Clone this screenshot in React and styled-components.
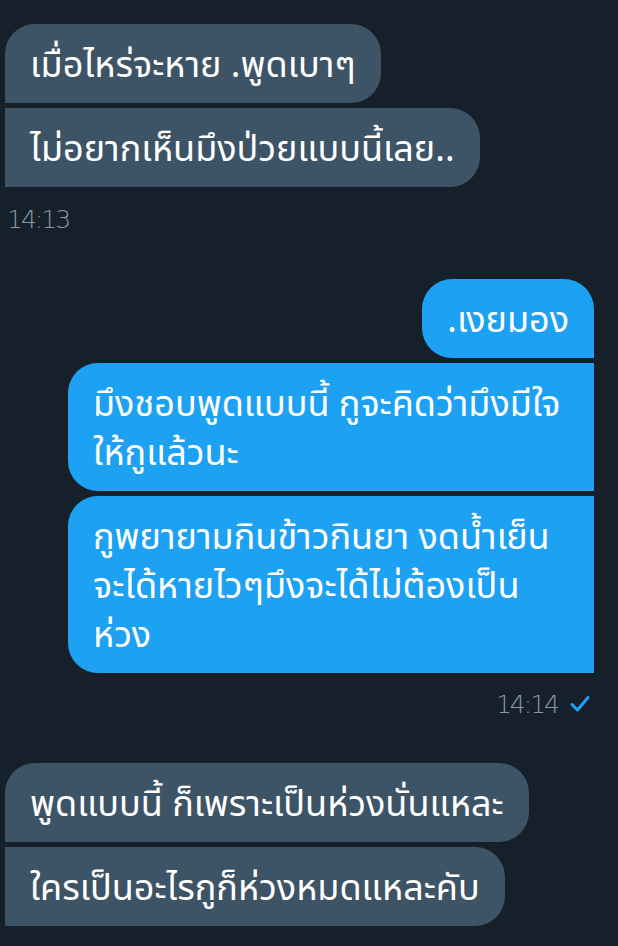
import React from 'react';
import styled, { createGlobalStyle } from 'styled-components';

const GlobalStyle = createGlobalStyle`
    html, body {
        margin: 0;
        padding: 0;
        background: #16202a;
    }
    body {
        font-family: "Noto Sans", "Noto Sans Thai", Roboto, sans-serif;
        -webkit-font-smoothing: antialiased;
    }
`

const Thread = styled.div`
    display: flex;
    flex-direction: column;
    width: 618px;
    height: 946px;
    overflow: hidden;
    padding-top: 24px;
    box-sizing: border-box;
`

const Group = styled.div`
    display: flex;
    flex-direction: column;
    gap: 5px;
    align-items: ${props => (props.mine ? 'flex-end' : 'flex-start')};
    padding: ${props => (props.mine ? '0 24px 0 0' : '0 0 0 5px')};
    margin-top: ${props => props.top || 0}px;
`

const Bubble = styled.div`
    max-width: 526px;
    width: ${props => (props.full ? '526px' : 'auto')};
    box-sizing: border-box;
    padding: 15px 25px;
    font-size: 36px;
    line-height: 49px;
    color: #ffffff;
    white-space: pre-line;
    background: ${props => (props.mine ? '#1da1f2' : '#3d5466')};
    border-radius: 30px;
    ${props => props.mine ? `
        border-bottom-right-radius: 0;
        border-top-right-radius: ${props.first ? '30px' : '0'};
    ` : `
        border-bottom-left-radius: 0;
        border-top-left-radius: ${props.first ? '30px' : '0'};
    `}
`

const Stamp = styled.div`
    display: flex;
    align-items: center;
    gap: 12px;
    height: 30px;
    margin-top: ${props => props.top || 17}px;
    justify-content: ${props => (props.mine ? 'flex-end' : 'flex-start')};
    padding: ${props => (props.mine ? '0 28px 0 0' : '0 0 0 7px')};

    span {
        font-family: "DejaVu Sans", sans-serif;
        font-weight: 200;
        font-size: 25px;
        color: #8899a6;
        letter-spacing: -2px;
    }
`

const Check = () => (
    <svg width="20" height="18" viewBox="0 0 20 18">
        <path d="M2 9.5 L7.5 15 L18 2.5" fill="none" stroke="#1da1f2" strokeWidth="3" strokeLinecap="round" strokeLinejoin="round" />
    </svg>
)

const incoming1 = [
    'เมื่อไหร่จะหาย .พูดเบาๆ',
    'ไม่อยากเห็นมึงป่วยแบบนี้เลย..',
]

const outgoing = [
    '.เงยมอง',
    'มึงชอบพูดแบบนี้ กูจะคิดว่ามึงมีใจ\nให้กูแล้วนะ',
    'กูพยายามกินข้าวกินยา งดน้ำเย็น\nจะได้หายไวๆมึงจะได้ไม่ต้องเป็น\nห่วง',
]

const incoming2 = [
    'พูดแบบนี้ ก็เพราะเป็นห่วงนั่นแหละ',
    'ใครเป็นอะไรกูก็ห่วงหมดแหละคับ',
]

export default function App() {
    return (
        <Thread>
            <GlobalStyle />
            <Group>
                {incoming1.map((text, i) => (
                    <Bubble key={i} first={i === 0}>{text}</Bubble>
                ))}
            </Group>
            <Stamp><span>14:13</span></Stamp>

            <Group mine top={45}>
                {outgoing.map((text, i) => (
                    <Bubble key={i} mine first={i === 0} full={text.includes('\n')}>{text}</Bubble>
                ))}
            </Group>
            <Stamp mine top={16}><span>14:14</span><Check /></Stamp>

            <Group top={44}>
                {incoming2.map((text, i) => (
                    <Bubble key={i} first={i === 0}>{text}</Bubble>
                ))}
            </Group>
        </Thread>
    );
}
